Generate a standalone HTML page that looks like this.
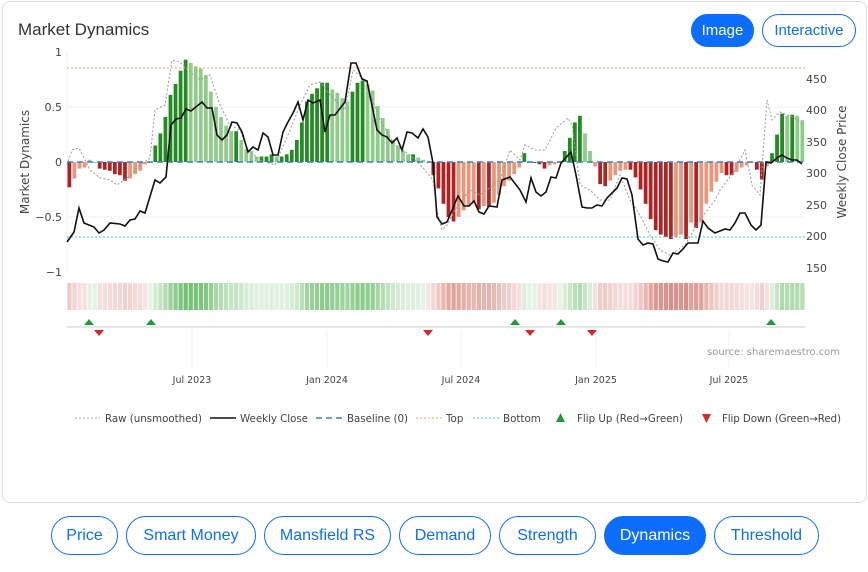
<!DOCTYPE html>
<html><head><meta charset="utf-8"><style>
body{margin:0;background:#fff;font-family:"Liberation Sans",sans-serif;}
.card{position:absolute;left:2px;top:1px;width:863px;height:500px;border:1px solid #dcdcdc;border-radius:8px;}
.title{position:absolute;left:18px;top:20px;font-size:17px;color:#333;}
.btn{position:absolute;border:1px solid #0d6efd;color:#0d6efd;border-radius:20px;font-size:16px;text-align:center;box-sizing:border-box;background:#fff;}
.btn.on{background:#0d6efd;color:#fff;}
svg text{font-family:"DejaVu Sans","Liberation Sans",sans-serif;}
</style></head><body>
<div class="card"></div>
<div class="title">Market Dynamics</div>
<div class="btn on" style="left:691px;top:14px;width:63px;height:33px;line-height:31px;font-size:15px">Image</div>
<div class="btn" style="left:762px;top:14px;width:94px;height:33px;line-height:31px;font-size:15px">Interactive</div>
<svg id="c" width="868" height="572" style="position:absolute;left:0;top:0">
<g stroke="#eef2f6" stroke-width="1">
<line x1="67" x2="805" y1="107" y2="107"/><line x1="67" x2="805" y1="217" y2="217"/>
<line x1="192" x2="192" y1="330" y2="368"/><line x1="327" x2="327" y1="330" y2="368"/><line x1="461" x2="461" y1="330" y2="368"/><line x1="596" x2="596" y1="330" y2="368"/><line x1="729" x2="729" y1="330" y2="368"/>
</g>
<line x1="67" x2="67" y1="52" y2="272" stroke="#eef2f6"/>
<line x1="67" x2="805" y1="327" y2="327" stroke="#ddd" stroke-width="1.5"/>
<g id="bars"></g><g id="strip"></g>
<line x1="67" x2="805" y1="68" y2="68" stroke="#f4a460" stroke-dasharray="2,2"/>
<line x1="67" x2="805" y1="237" y2="237" stroke="#40c4d8" stroke-dasharray="2,2"/>
<line x1="67" x2="805" y1="162" y2="162" stroke="#3b7fc4" stroke-width="1.5" stroke-dasharray="6,4"/>
<polyline id="raw" fill="none" stroke="#999" stroke-width="1" stroke-dasharray="2,2"/>
<polyline id="wk" fill="none" stroke="#111" stroke-width="1.6"/>
<g id="mk"></g>
<g font-size="11" fill="#444" text-anchor="end">
<text x="62" y="56">1</text><text x="62" y="111">0.5</text><text x="62" y="166">0</text><text x="62" y="221">−0.5</text><text x="62" y="276">−1</text>
</g>
<g font-size="11" fill="#444">
<text x="806" y="83">450</text><text x="806" y="114">400</text><text x="806" y="146">350</text><text x="806" y="177">300</text><text x="806" y="209">250</text><text x="806" y="240">200</text><text x="806" y="272">150</text>
</g>
<text font-size="12" fill="#444" transform="translate(29,162) rotate(-90)" text-anchor="middle">Market Dynamics</text>
<text font-size="12" fill="#444" transform="translate(846,162) rotate(-90)" text-anchor="middle">Weekly Close Price</text>
<g font-size="9.5" fill="#444" text-anchor="middle">
<text x="192" y="383">Jul 2023</text><text x="327" y="383">Jan 2024</text><text x="461" y="383">Jul 2024</text><text x="596" y="383">Jan 2025</text><text x="729" y="383">Jul 2025</text>
</g>
<text x="840" y="355" font-size="10" fill="#999" text-anchor="end">source: sharemaestro.com</text>
<g font-size="10.3" fill="#444">
<line x1="75" x2="100" y1="418" y2="418" stroke="#aaa" stroke-dasharray="2,2"/><text x="105" y="422" textLength="97">Raw (unsmoothed)</text>
<line x1="210" x2="236" y1="418" y2="418" stroke="#111" stroke-width="1.6"/><text x="240" y="422" textLength="68">Weekly Close</text>
<line x1="316" x2="342" y1="418" y2="418" stroke="#3b7fc4" stroke-width="1.5" stroke-dasharray="6,4"/><text x="347" y="422" textLength="61">Baseline (0)</text>
<line x1="416" x2="442" y1="418" y2="418" stroke="#f4a460" stroke-dasharray="2,2"/><text x="446" y="422">Top</text>
<line x1="473" x2="499" y1="418" y2="418" stroke="#40c4d8" stroke-dasharray="2,2"/><text x="503" y="422">Bottom</text>
<polygon points="556,422 565,422 560.5,413" fill="#1f9a3a"/><text x="577" y="422" textLength="106">Flip Up (Red→Green)</text>
<polygon points="702,414 711,414 706.5,423" fill="#d62728"/><text x="722" y="422" textLength="119">Flip Down (Green→Red)</text>
</g>
</svg>
<div class="btn" style="left:51px;top:516px;width:67px;height:39px;line-height:37px">Price</div>
<div class="btn" style="left:126px;top:516px;width:130px;height:39px;line-height:37px">Smart Money</div>
<div class="btn" style="left:264px;top:516px;width:127px;height:39px;line-height:37px">Mansfield RS</div>
<div class="btn" style="left:399px;top:516px;width:92px;height:39px;line-height:37px">Demand</div>
<div class="btn" style="left:499px;top:516px;width:97px;height:39px;line-height:37px">Strength</div>
<div class="btn on" style="left:604px;top:516px;width:102px;height:39px;line-height:37px">Dynamics</div>
<div class="btn" style="left:714px;top:516px;width:105px;height:39px;line-height:37px">Threshold</div>
<script>
var ns="http://www.w3.org/2000/svg";
function el(t,a,p){var e=document.createElementNS(ns,t);for(var k in a)e.setAttribute(k,a[k]);document.getElementById(p).appendChild(e);}
var v=[-0.23,-0.15,-0.06,-0.05,0.02,0,-0.06,-0.07,-0.08,-0.11,-0.12,-0.17,-0.15,-0.11,-0.08,-0.02,0,0.15,0.26,0.41,0.61,0.71,0.83,0.93,0.9,0.87,0.85,0.79,0.64,0.5,0.41,0.33,0.28,0.28,0.2,0.12,0.1,0.05,0.05,0.05,0.07,0.05,0.05,0.07,0.11,0.2,0.36,0.55,0.62,0.67,0.72,0.72,0.66,0.63,0.58,0.55,0.64,0.72,0.74,0.7,0.65,0.51,0.4,0.3,0.2,0.15,0.1,0.07,0.07,0.04,0.02,-0.01,-0.12,
-0.24,-0.38,-0.5,-0.54,-0.5,-0.44,-0.4,-0.37,-0.43,-0.4,-0.41,-0.37,-0.3,-0.22,-0.17,-0.11,-0.05,0.08,0,0,-0.02,-0.06,-0.03,-0.02,0,0.1,0.22,0.36,0.42,0.26,0.1,-0.04,-0.2,-0.22,-0.17,-0.12,-0.08,-0.07,-0.07,-0.14,-0.25,-0.38,-0.52,-0.62,-0.66,-0.68,-0.7,-0.68,-0.66,-0.7,-0.55,-0.6,-0.55,-0.38,-0.27,-0.18,-0.1,-0.12,-0.12,-0.09,-0.05,-0.03,-0.01,-0.07,-0.16,-0.04,0.08,0.25,0.44,0.42,0.43,0.42,0.38];
var n=v.length,w=(805-67)/n;
for(var i=0;i<n;i++){var x=67+i*w,y=v[i],prev=i?v[i-1]:0;var up=Math.abs(y)>=Math.abs(prev);
var col=y>=0?(up?"#228b22":"#8fcc8a"):(up?"#b22222":"#e9967a");
var h=Math.abs(y)*110;el("rect",{x:x+0.5,y:y>=0?162-h:162,width:w-1.3,height:Math.max(h,1),fill:col},"bars");
var a=Math.min(1,0.18+Math.abs(y)*0.9);el("rect",{x:x+0.3,y:283,width:w-0.8,height:27,fill:y>=0?"#3aa53a":"#c0392b","fill-opacity":a*0.7},"strip");}
document.getElementById("wk").setAttribute("points","67,242 74,232 79,208 84,223 94,227 99,233 104,230 110,223 120,224 125,226 130,220 135,219 140,211 145,213 155,180 160,183 166,177 171,125 176,119 181,118 186,109 191,111 202,102 207,108 212,108 217,135 222,140 227,135 232,122 237,123 242,132 248,152 253,147 258,150 263,133 268,137 273,155 278,155 283,132 288,122 293,113 298,102 303,120 308,100 313,103 320,100 325,132 330,115 335,115 345,102 351,63 356,63 362,79 367,81 377,130 382,135 387,137 392,143 397,138 402,150 407,132 412,133 418,138 423,129 428,137 433,163 437,217 442,224 447,222 458,196 464,206 469,206 474,201 479,212 484,214 489,206 497,207 502,180 510,177 520,190 526,202 531,178 536,192 541,196 546,192 551,177 556,178 561,163 571,152 576,175 582,207 587,208 592,208 597,205 602,206 607,198 612,193 617,188 622,178 627,179 632,195 638,239 643,245 648,243 653,244 658,259 663,261 668,262 673,253 678,254 683,249 688,243 693,243 698,243 703,221 708,228 715,233 720,231 725,229 730,230 735,223 740,213 745,213 751,225 756,230 761,225 766,162 771,163 777,158 782,155 787,158 792,160 797,160 802,164");
document.getElementById("raw").setAttribute("points","67,165 72,150 79,148 90,170 100,178 110,180 117,185 127,178 140,165 150,158 155,110 165,105 172,60 180,62 190,72 200,80 210,75 220,105 230,125 240,130 248,150 260,160 275,165 290,130 300,105 310,85 320,82 330,95 345,110 353,70 365,80 380,120 395,145 410,155 425,170 433,180 437,210 442,230 447,225 455,210 470,190 480,195 500,180 510,150 520,160 525,145 535,150 545,150 556,128 568,118 572,125 580,185 590,190 600,200 610,200 620,175 630,200 640,215 650,235 660,250 670,255 685,245 700,220 715,200 720,190 735,170 745,150 752,185 760,195 767,100 772,120 780,112 795,118 803,125");
[89,151,515,561,771].forEach(function(x){el("polygon",{points:(x-5)+",325 "+(x+5)+",325 "+x+",319",fill:"#1f9a3a"},"mk");});
[99,428,530,592].forEach(function(x){el("polygon",{points:(x-5)+",330 "+(x+5)+",330 "+x+",336",fill:"#d62728"},"mk");});
</script>
</body></html>
